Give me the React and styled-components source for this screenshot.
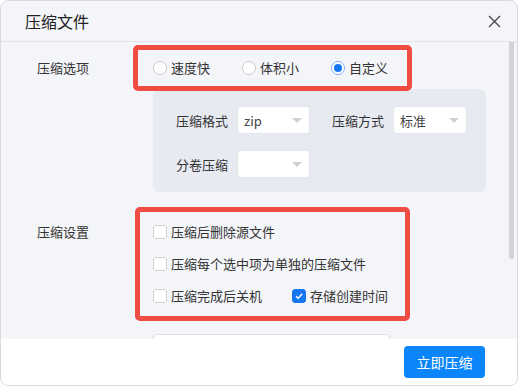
import React from 'react';
import styled, { createGlobalStyle } from 'styled-components';

const GlobalStyle = createGlobalStyle`
  html, body { margin: 0; padding: 0; background: #ffffff; }
  body { font-family: "Noto Sans CJK SC", "Noto Sans", sans-serif; }
  * { box-sizing: border-box; }
`;

const Window = styled.div`
  position: relative;
  width: 518px;
  height: 386px;
  border: 1px solid #d9dadf;
  border-radius: 8px;
  overflow: hidden;
  background: #f4f5f9;
  display: flex;
  flex-direction: column;
`;

const TitleBar = styled.div`
  height: 41px;
  flex: none;
  border-bottom: 1px solid #e2e3e8;
  display: flex;
  align-items: center;
  justify-content: space-between;
  padding: 0 13px 0 24px;
`;

const Title = styled.span`
  font-size: 16px;
  color: #222;
  line-height: 20px;
`;

const CloseButton = styled.button`
  width: 20px;
  height: 20px;
  border: 0;
  padding: 0;
  background: transparent;
  display: flex;
  align-items: center;
  justify-content: center;
  cursor: pointer;
`;

const Body = styled.div`
  flex: 1;
  overflow-y: auto;
  padding: 3px 0 86px 36px;
  scrollbar-width: none;
  &::-webkit-scrollbar { display: none; }
`;

// scroll thumb drawn over the body's right edge
const ScrollThumb = styled.div`
  position: absolute;
  top: 41px;
  right: 3px;
  width: 5px;
  height: 217px;
  border-radius: 0 0 3px 3px;
  background: #d3d4d9;
`;

const Row = styled.div`
  display: grid;
  grid-template-columns: 96px auto;
  align-items: ${p => (p.$top ? 'start' : 'center')};
  margin-top: ${p => p.$gap || 0}px;
`;

const RowLabel = styled.span`
  font-size: 13px;
  line-height: 20px;
  color: #333;
  margin-top: ${p => p.$offset || 0}px;
`;

const Highlight = styled.div`
  border: 5px solid #ef4c42;
  border-radius: 5px;
  width: ${p => p.$w}px;
  margin-left: ${p => p.$shift || 0}px;
`;

const RadioGroup = styled.div`
  height: 36px;
  display: flex;
  align-items: center;
  gap: 32px;
  padding: 0 15px;
`;

const Option = styled.label`
  display: flex;
  align-items: center;
  gap: 4px;
  font-size: 13px;
  line-height: 20px;
  color: #333;
  white-space: nowrap;
`;

const RadioDot = styled.span`
  width: 14px;
  height: 14px;
  border-radius: 50%;
  background: #fff;
  border: 1px solid ${p => (p.$on ? '#7fb3f5' : '#c9cace')};
  display: flex;
  align-items: center;
  justify-content: center;
  &::after {
    content: '';
    width: 8px;
    height: 8px;
    border-radius: 50%;
    background: ${p => (p.$on ? '#1677f2' : 'transparent')};
  }
`;

const Panel = styled.div`
  margin: -2px 0 0 116px;
  width: 333px;
  background: #e8eaf2;
  border-radius: 7px;
  padding: 17px 18px 14px 23px;
  display: flex;
  flex-direction: column;
  gap: 16px;
`;

const FieldRow = styled.div`
  display: flex;
  align-items: center;
  gap: 22px;
`;

const Field = styled.div`
  display: flex;
  align-items: center;
  gap: 9px;
`;

const FieldLabel = styled.span`
  font-size: 13px;
  color: #333;
  white-space: nowrap;
`;

const Select = styled.div`
  width: ${p => p.$w || 73}px;
  height: 28px;
  background: #fff;
  border: 1px solid #e3e5ec;
  border-radius: 4px;
  display: flex;
  align-items: center;
  padding: 0 7px 0 6px;
  font-size: 13px;
  color: #444;
  &::after {
    content: '';
    margin-left: auto;
    border-left: 5px solid transparent;
    border-right: 5px solid transparent;
    border-top: 5px solid #cfd0d4;
  }
`;

const CheckGroup = styled.div`
  display: flex;
  flex-direction: column;
  gap: 12px;
  padding: 10px 13px;
`;

const CheckRow = styled.div`
  display: grid;
  grid-template-columns: 139px auto;
`;

const Box = styled.span`
  width: 14px;
  height: 14px;
  border-radius: 3px;
  flex: none;
  border: 1px solid ${p => (p.$on ? '#1677f2' : '#cfd0d4')};
  background: ${p => (p.$on ? '#1677f2' : '#fff')};
  display: flex;
  align-items: center;
  justify-content: center;
`;

const PasswordInput = styled.div`
  margin: 13px 0 0 116px;
  width: 237px;
  height: 28px;
  background: #fff;
  border: 1px solid #dfe0e5;
  border-radius: 4px;
`;

const Footer = styled.div`
  height: 46px;
  flex: none;
  background: #fff;
  display: flex;
  align-items: center;
  justify-content: flex-end;
  padding-right: 32px;
`;

const PrimaryButton = styled.button`
  width: 81px;
  height: 32px;
  border: 0;
  border-radius: 4px;
  background: #0b85fa;
  color: #fff;
  font-family: "Noto Sans CJK SC", sans-serif;
  font-size: 14px;
  cursor: pointer;
`;

const Radio = ({ on, children }) => (
  <Option>
    <RadioDot $on={on} />
    {children}
  </Option>
);

const Check = ({ on, children }) => (
  <Option>
    <Box $on={on}>
      {on && (
        <svg width="10" height="10" viewBox="0 0 10 10">
          <path d="M2 5.2 L4.2 7.3 L8.2 2.8" fill="none" stroke="#fff" strokeWidth="1.4" />
        </svg>
      )}
    </Box>
    {children}
  </Option>
);

export default function App() {
  return (
    <>
      <GlobalStyle />
      <Window>
        <TitleBar>
          <Title>压缩文件</Title>
          <CloseButton aria-label="关闭">
            <svg width="13" height="13" viewBox="0 0 13 13">
              <path d="M1 1 L12 12 M12 1 L1 12" stroke="#444" strokeWidth="1.3" />
            </svg>
          </CloseButton>
        </TitleBar>

        <Body>
          <Row>
            <RowLabel>压缩选项</RowLabel>
            <Highlight $w={279}>
              <RadioGroup>
                <Radio>速度快</Radio>
                <Radio>体积小</Radio>
                <Radio on>自定义</Radio>
              </RadioGroup>
            </Highlight>
          </Row>

          <Panel>
            <FieldRow>
              <Field>
                <FieldLabel>压缩格式</FieldLabel>
                <Select>zip</Select>
              </Field>
              <Field>
                <FieldLabel>压缩方式</FieldLabel>
                <Select $w={74}>标准</Select>
              </Field>
            </FieldRow>
            <FieldRow>
              <Field>
                <FieldLabel>分卷压缩</FieldLabel>
                <Select />
              </Field>
            </FieldRow>
          </Panel>

          <Row $top $gap={15}>
            <RowLabel $offset={15}>压缩设置</RowLabel>
            <Highlight $w={275} $shift={2}>
              <CheckGroup>
                <Check>压缩后删除源文件</Check>
                <Check>压缩每个选中项为单独的压缩文件</Check>
                <CheckRow>
                  <Check>压缩完成后关机</Check>
                  <Check on>存储创建时间</Check>
                </CheckRow>
              </CheckGroup>
            </Highlight>
          </Row>

          <PasswordInput />
        </Body>

        <ScrollThumb />

        <Footer>
          <PrimaryButton>立即压缩</PrimaryButton>
        </Footer>
      </Window>
    </>
  );
}
